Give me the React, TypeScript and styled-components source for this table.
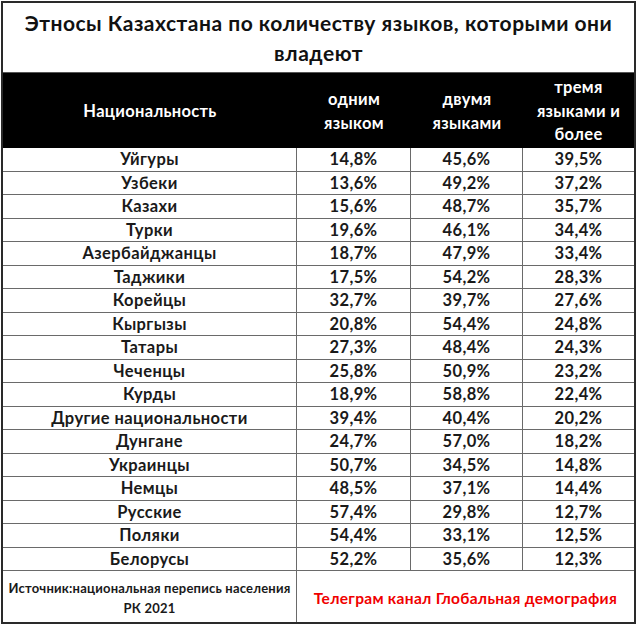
import React from "react";
import styled, { createGlobalStyle } from "styled-components";

const Global = createGlobalStyle`
  html, body { margin: 0; padding: 0; background: #ffffff; }
  body { font-family: Lato, "Noto Sans", sans-serif; }
`;

const Frame = styled.div`
  width: 635px;
  margin: 1px 0 0 1px;
  border: 2px solid #2a2a2a;
  box-sizing: border-box;
  background: #fff;
  display: grid;
  grid-template-columns: 294px 114px 112px 111px;
`;

const Title = styled.div`
  grid-column: 1 / -1;
  height: 70px;
  box-sizing: border-box;
  padding-top: 5px;
  text-align: center;
  font-weight: 700;
  font-size: 21px;
  letter-spacing: 0.5px;
  line-height: 30px;
  color: #111;
  border-bottom: 1px solid #555;
`;

const HeadCell = styled.div`
  background: #000;
  color: #fff;
  font-weight: 700;
  font-size: 16.5px;
  letter-spacing: 0.3px;
  line-height: 23.5px;
  height: 75px;
  display: flex;
  align-items: center;
  justify-content: center;
  text-align: center;
  padding-top: 2px;
  box-sizing: border-box;
`;

const Cell = styled.div<{ $last?: boolean }>`
  height: 23.5px;
  box-sizing: border-box;
  display: flex;
  align-items: center;
  justify-content: center;
  font-weight: 700;
  font-size: 16.5px;
  letter-spacing: 0.4px;
  color: #1a1a1a;
  border-bottom: 1px solid #6a6a6a;
  border-right: ${(p) => (p.$last ? "none" : "1px solid #6a6a6a")};
`;

const Source = styled.div`
  height: 51px;
  box-sizing: border-box;
  display: flex;
  align-items: center;
  justify-content: center;
  text-align: center;
  font-weight: 700;
  font-size: 13px;
  letter-spacing: 0.2px;
  line-height: 20px;
  color: #1a1a1a;
  border-right: 1px solid #6a6a6a;
  padding-top: 3px;
`;

const Channel = styled.div`
  grid-column: 2 / -1;
  height: 51px;
  display: flex;
  align-items: center;
  justify-content: center;
  font-weight: 700;
  font-size: 15.5px;
  letter-spacing: 0.3px;
  color: #f00000;
  padding-top: 3px;
  box-sizing: border-box;
`;

const rows: [string, string, string, string][] = [
  ["Уйгуры", "14,8%", "45,6%", "39,5%"],
  ["Узбеки", "13,6%", "49,2%", "37,2%"],
  ["Казахи", "15,6%", "48,7%", "35,7%"],
  ["Турки", "19,6%", "46,1%", "34,4%"],
  ["Азербайджанцы", "18,7%", "47,9%", "33,4%"],
  ["Таджики", "17,5%", "54,2%", "28,3%"],
  ["Корейцы", "32,7%", "39,7%", "27,6%"],
  ["Кыргызы", "20,8%", "54,4%", "24,8%"],
  ["Татары", "27,3%", "48,4%", "24,3%"],
  ["Чеченцы", "25,8%", "50,9%", "23,2%"],
  ["Курды", "18,9%", "58,8%", "22,4%"],
  ["Другие национальности", "39,4%", "40,4%", "20,2%"],
  ["Дунгане", "24,7%", "57,0%", "18,2%"],
  ["Украинцы", "50,7%", "34,5%", "14,8%"],
  ["Немцы", "48,5%", "37,1%", "14,4%"],
  ["Русские", "57,4%", "29,8%", "12,7%"],
  ["Поляки", "54,4%", "33,1%", "12,5%"],
  ["Белорусы", "52,2%", "35,6%", "12,3%"],
];

export default function App() {
  return (
    <>
      <Global />
      <Frame>
        <Title>
          Этносы Казахстана по количеству языков, которыми они
          <br />
          владеют
        </Title>
        <HeadCell>Национальность</HeadCell>
        <HeadCell>
          одним
          <br />
          языком
        </HeadCell>
        <HeadCell>
          двумя
          <br />
          языками
        </HeadCell>
        <HeadCell>
          тремя
          <br />
          языками и
          <br />
          более
        </HeadCell>
        {rows.map((r) =>
          r.map((v, i) => (
            <Cell key={r[0] + i} $last={i === 3}>
              {v}
            </Cell>
          ))
        )}
        <Source>
          Источник:национальная перепись населения
          <br />
          РК 2021
        </Source>
        <Channel>Телеграм канал Глобальная демография</Channel>
      </Frame>
    </>
  );
}
